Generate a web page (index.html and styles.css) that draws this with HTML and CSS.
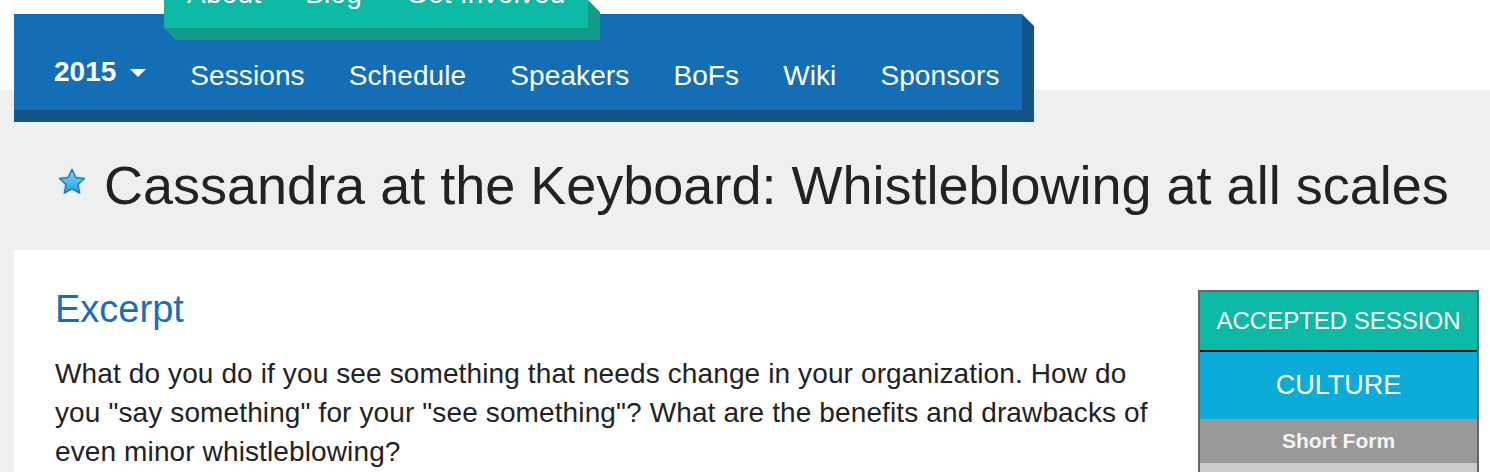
FILE: index.html
```html
<!DOCTYPE html>
<html lang="en">
<head>
<meta charset="utf-8">
<title>Cassandra at the Keyboard: Whistleblowing at all scales</title>
<link rel="stylesheet" href="styles.css">
</head>
<body>
<header class="site-header">
  <nav class="main-nav">
    <div class="top-menu">
      <ul class="top-menu-list">
        <li>About</li>
        <li>Blog</li>
        <li>Get Involved</li>
      </ul>
    </div>
    <ul class="nav-list">
      <li class="nav-year"><span class="year">2015</span><span class="caret"></span></li>
      <li>Sessions</li>
      <li>Schedule</li>
      <li>Speakers</li>
      <li>BoFs</li>
      <li>Wiki</li>
      <li>Sponsors</li>
    </ul>
  </nav>
</header>

<section class="title-bar">
  <svg class="star" viewBox="0 0 30 30" width="30" height="30" aria-hidden="true">
    <defs>
      <linearGradient id="starFill" x1="0" y1="0" x2="0" y2="1">
        <stop offset="0" stop-color="#7fd6ff"/>
        <stop offset="1" stop-color="#1d9fe6"/>
      </linearGradient>
    </defs>
    <path d="M15 2.5 L18.7 10.4 L27.36 11.48 L20.99 17.45 L22.64 26.02 L15 21.8 L7.36 26.02 L9.01 17.45 L2.64 11.48 L11.3 10.4 Z" fill="none" stroke="#d6e6ef" stroke-width="3.5" stroke-linejoin="round"/>
    <path d="M15 2.5 L18.7 10.4 L27.36 11.48 L20.99 17.45 L22.64 26.02 L15 21.8 L7.36 26.02 L9.01 17.45 L2.64 11.48 L11.3 10.4 Z" fill="url(#starFill)" stroke="#2d7aa8" stroke-width="1.5" stroke-linejoin="round"/>
  </svg>
  <h1 class="session-title">Cassandra at the Keyboard: Whistleblowing at all scales</h1>
</section>

<main class="content">
  <div class="main-col">
    <h2 class="section-heading">Excerpt</h2>
    <p class="excerpt">What do you do if you see something that needs change in your organization. How do you "say something" for your "see something"? What are the benefits and drawbacks of even minor whistleblowing?</p>
  </div>
  <aside class="session-box">
    <div class="status">ACCEPTED SESSION</div>
    <div class="track">CULTURE</div>
    <div class="format">Short Form</div>
    <div class="rest"></div>
  </aside>
</main>
</body>
</html>
```

FILE: styles.css
```css
html, body {
  margin: 0;
  padding: 0;
}

body {
  background: #eeeff1;
  font-family: "Liberation Sans", Arial, Helvetica, sans-serif;
  color: #222;
  overflow: hidden;
}

.site-header {
  background: linear-gradient(to bottom, #ffffff 0, #ffffff 90px, #eeeff1 90px);
  padding-top: 14px;
  padding-left: 14px;
}

.main-nav {
  position: relative;
  width: 1008px;
  height: 96px;
  background: #136eb5;
  border-bottom: 12px solid #15548a;
}

.main-nav::after {
  content: "";
  position: absolute;
  right: -12px;
  top: 0;
  width: 12px;
  height: 108px;
  background: #15548a;
  clip-path: polygon(0 0, 100% 12px, 100% 100%, 0 100%);
}

.top-menu {
  position: absolute;
  left: 150px;
  top: -14px;
  width: 424px;
  height: 28px;
}

.top-menu::before {
  content: "";
  position: absolute;
  left: 0;
  top: 0;
  width: calc(100% + 12px);
  height: calc(100% + 12px);
  background: #139a89;
  clip-path: polygon(0 0, calc(100% - 12px) 0, 100% 12px, 100% 100%, 12px 100%, 0 calc(100% - 12px));
}

.top-menu-list {
  position: relative;
  display: flex;
  height: 28px;
  margin: 0;
  padding: 0 0 0 1px;
  list-style: none;
  background: #0bb9a5;
  overflow: hidden;
}

.top-menu-list li {
  padding: 0 22px;
  margin-top: -20px;
  font-size: 28px;
  line-height: 28px;
  letter-spacing: 0.2px;
  color: #fff;
  white-space: nowrap;
}

.nav-list {
  display: flex;
  margin: 0;
  padding: 28px 0 0 18px;
  list-style: none;
}

.nav-list li {
  padding: 0 22px;
  font-size: 28px;
  line-height: 68px;
  letter-spacing: 0.1px;
  color: #fff;
  white-space: nowrap;
}

.year {
  font-weight: bold;
  line-height: 1;
  letter-spacing: 0;
  vertical-align: 4px;
}

.caret {
  display: inline-block;
  width: 0;
  height: 0;
  margin-left: 14px;
  border-left: 8px solid transparent;
  border-right: 8px solid transparent;
  border-top: 8px solid #fff;
  vertical-align: 8px;
}

.title-bar {
  display: flex;
  align-items: flex-start;
  padding: 31px 0 33px 57px;
}

.star {
  flex: none;
  margin-top: 14px;
  margin-right: 17px;
}

.session-title {
  margin: 0;
  font-size: 54px;
  line-height: 64px;
  font-weight: normal;
  color: #222;
  white-space: nowrap;
}

.content {
  display: flex;
  align-items: flex-start;
  margin-left: 14px;
  background: #fff;
  min-height: 222px;
}

.main-col {
  flex: none;
  width: 1108px;
  padding: 37px 0 0 41px;
}

.section-heading {
  margin: 0;
  font-size: 38px;
  line-height: 44px;
  font-weight: normal;
  color: #1a6eb8;
}

.excerpt {
  margin: 23px 0 0;
  font-size: 28px;
  line-height: 39px;
  letter-spacing: 0.12px;
  color: #222;
}

.session-box {
  flex: none;
  width: 277px;
  margin: 40px 0 0 35px;
  border: 2px solid #666;
  border-bottom: none;
  color: #fff;
  text-align: center;
}

.status {
  display: flex;
  align-items: center;
  justify-content: center;
  height: 58px;
  background: #0bb9a5;
  border-bottom: 2px solid #111;
  font-size: 24px;
  white-space: nowrap;
}

.track {
  display: flex;
  align-items: center;
  justify-content: center;
  height: 67px;
  background: #0aabd8;
  font-size: 27px;
}

.format {
  display: flex;
  align-items: center;
  justify-content: center;
  height: 44px;
  background: #999;
  font-size: 21px;
  font-weight: bold;
  color: #f4f4f4;
}

.rest {
  height: 60px;
  background: #ccc;
}
```
